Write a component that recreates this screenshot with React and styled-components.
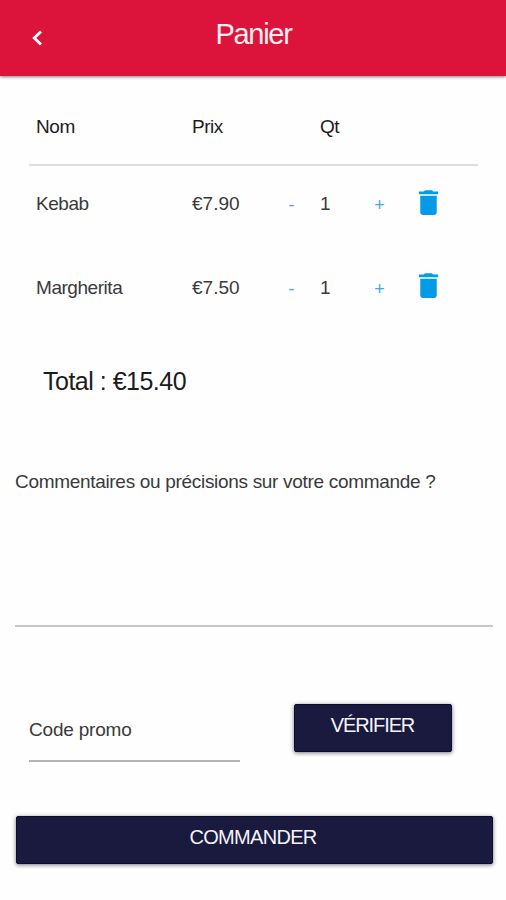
import React, { useState } from 'react'
import styled, { createGlobalStyle } from 'styled-components'

const GlobalStyle = createGlobalStyle`
  * {
    box-sizing: border-box;
  }

  body {
    margin: 0;
    background: #fefefe;
    font-family: "Liberation Sans", Arial, sans-serif;
    color: #3a3a3a;
  }

  button, input, textarea {
    font-family: inherit;
    border: 0;
    padding: 0;
    border-radius: 0;
    background: none;
    outline: none;
  }
`

const Page = styled.div`
  display: flex;
  flex-direction: column;
  height: 900px;
`

const Header = styled.header`
  display: grid;
  grid-template-columns: 76px 1fr 76px;
  height: 76px;
  background: #dc143c;
  box-shadow: 0 1px 3px rgba(0, 0, 0, 0.5);
`

const BackButton = styled.button`
  height: 76px;
  padding: 3px 3px 0 0;
  color: #ffffff;
`

const Title = styled.h1`
  margin: 0;
  padding-left: 1px;
  font-size: 29px;
  font-weight: 400;
  line-height: 69px;
  letter-spacing: -1.3px;
  text-align: center;
  color: #fdeef0;
`

const Table = styled.section`
  margin: 13px 28px 0 29px;
`

const Row = styled.div`
  display: grid;
  grid-template-columns: 156px 90px 19px 19px 46px 27px 1fr;
  align-items: center;
  height: 83.5px;
  padding: 0 0 7px 7px;
  font-size: 19px;
`

const HeadRow = styled(Row)`
  height: 77px;
  padding-bottom: 0;
  border-bottom: 2px solid #dedede;
  color: #1c1c1c;
`

const Cell = styled.span`
  letter-spacing: ${({ $spacing }) => $spacing || '-0.45px'};
`

const QtyCell = styled(Cell)`
  grid-column: 5;
`

const QtyButton = styled.button`
  padding-top: 2px;
  font-size: 18px;
  line-height: 24px;
  color: #46a6ea;
`

const TrashButton = styled.button`
  height: 33px;
  width: 33px;
  margin: -4px 0 0 19px;
  color: #039be5;

  svg {
    display: block;
  }
`

const Total = styled.p`
  margin: 30px 0 0 43px;
  font-size: 25px;
  line-height: 36px;
  letter-spacing: -0.5px;
  color: #1c1c1c;
`

const Comments = styled.textarea`
  display: block;
  height: 158px;
  margin: 70px 13px 0 15px;
  border-bottom: 2px solid #c6c8c8;
  font-size: 19px;
  line-height: 26px;
  letter-spacing: -0.31px;
  resize: none;
  overflow: hidden;

  &::placeholder {
    color: #3a3a3a;
    opacity: 1;
  }
`

const Promo = styled.div`
  display: flex;
  justify-content: space-between;
  margin: 77px 54px 0 29px;
`

const PromoInput = styled.input`
  width: 211px;
  height: 58px;
  padding-bottom: 5px;
  border-bottom: 2px solid #b4b4b4;
  font-size: 19px;
  letter-spacing: -0.2px;

  &::placeholder {
    color: #3a3a3a;
    opacity: 1;
  }
`

const Button = styled.button`
  height: 48px;
  padding-bottom: 5px;
  border: 1px solid #0c0c30;
  border-radius: 2px;
  background: #1a1a3f;
  box-shadow: 0 1px 4px rgba(0, 0, 0, 0.55);
  font-size: 20px;
  letter-spacing: -0.7px;
  text-transform: uppercase;
  color: #f4f4fa;
`

const VerifyButton = styled(Button)`
  width: 158px;
  padding-right: 1px;
  letter-spacing: -1.1px;
`

const OrderButton = styled(Button)`
  margin: 54px 13px 0 16px;
  padding-right: 3px;
`

const BackIcon = () => (
  <svg width="12" height="16" viewBox="0 0 12 16" fill="none" stroke="currentColor" strokeWidth="2.8">
    <path d="M10 1.4L3.2 8l6.8 6.6" />
  </svg>
)

const TrashIcon = () => (
  <svg width="33" height="33" viewBox="0 0 24 24" fill="currentColor">
    <path d="M6 19c0 1.1.9 2 2 2h8c1.1 0 2-.9 2-2V7H6v12zM19 4h-3.5l-1-1h-5l-1 1H5v2h14V4z" />
  </svg>
)

const products = [
  { name: 'Kebab', price: 7.9, qty: 1 },
  { name: 'Margherita', price: 7.5, qty: 1 }
]

const formatPrice = (price) => `€${price.toFixed(2)}`

const App = () => {
  const [items, setItems] = useState(products)

  const changeQty = (name, diff) => setItems(items.map((item) => (
    item.name === name ? { ...item, qty: Math.max(1, item.qty + diff) } : item
  )))
  const remove = (name) => setItems(items.filter((item) => item.name !== name))
  const total = items.reduce((sum, { price, qty }) => sum + price * qty, 0)

  return (
    <Page>
      <GlobalStyle />
      <Header>
        <BackButton aria-label="Retour"><BackIcon /></BackButton>
        <Title>Panier</Title>
      </Header>
      <Table>
        <HeadRow>
          <Cell>Nom</Cell>
          <Cell>Prix</Cell>
          <QtyCell>Qt</QtyCell>
        </HeadRow>
        {items.map(({ name, price, qty }) => (
          <Row key={name}>
            <Cell>{name}</Cell>
            <Cell $spacing="0">{formatPrice(price)}</Cell>
            <QtyButton onClick={() => changeQty(name, -1)}>-</QtyButton>
            <QtyCell>{qty}</QtyCell>
            <QtyButton onClick={() => changeQty(name, 1)}>+</QtyButton>
            <TrashButton aria-label="Supprimer" onClick={() => remove(name)}><TrashIcon /></TrashButton>
          </Row>
        ))}
      </Table>
      <Total>Total : {formatPrice(total)}</Total>
      <Comments placeholder="Commentaires ou précisions sur votre commande ?" />
      <Promo>
        <PromoInput placeholder="Code promo" />
        <VerifyButton>Vérifier</VerifyButton>
      </Promo>
      <OrderButton>Commander</OrderButton>
    </Page>
  )
}

export default App
